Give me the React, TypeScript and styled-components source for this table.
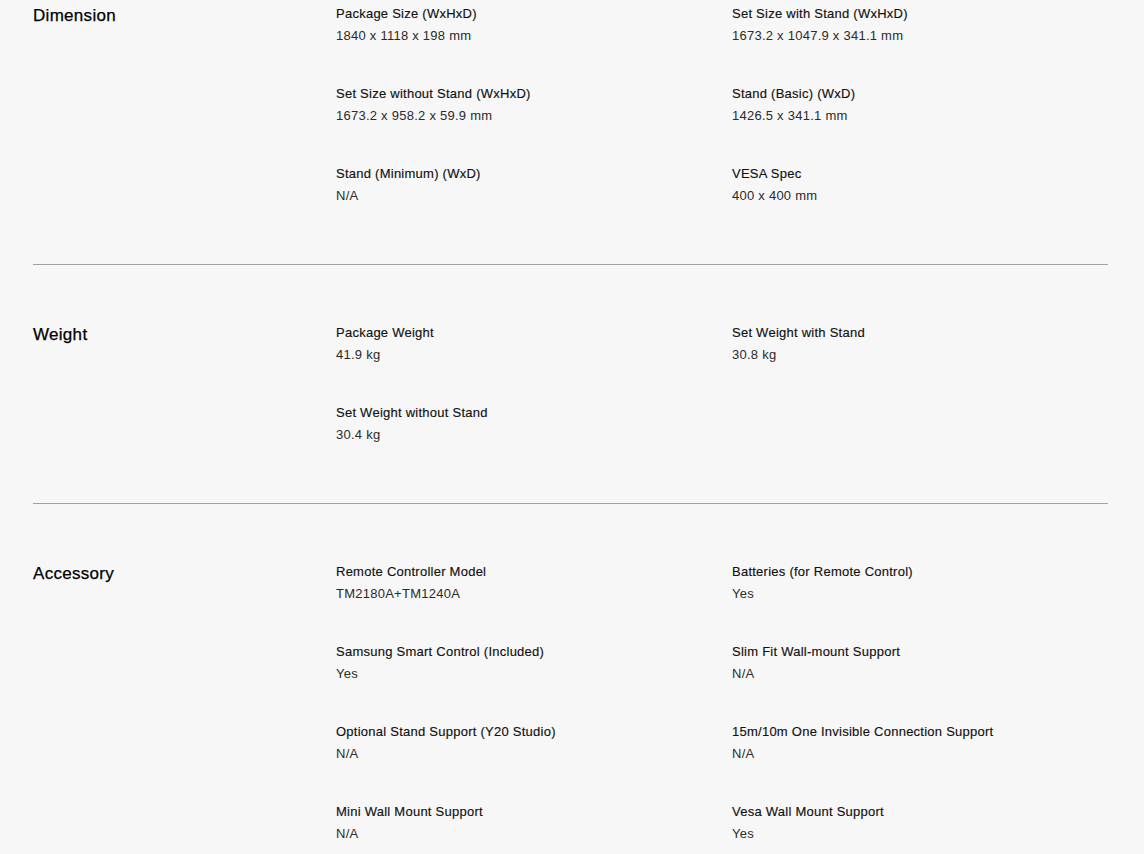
import React from 'react';
import styled, { createGlobalStyle } from 'styled-components';

type Spec = { label: string; value: string };
type Group = { title: string; specs: Spec[] };

const groups: Group[] = [
  {
    title: 'Dimension',
    specs: [
      { label: 'Package Size (WxHxD)', value: '1840 x 1118 x 198 mm' },
      { label: 'Set Size with Stand (WxHxD)', value: '1673.2 x 1047.9 x 341.1 mm' },
      { label: 'Set Size without Stand (WxHxD)', value: '1673.2 x 958.2 x 59.9 mm' },
      { label: 'Stand (Basic) (WxD)', value: '1426.5 x 341.1 mm' },
      { label: 'Stand (Minimum) (WxD)', value: 'N/A' },
      { label: 'VESA Spec', value: '400 x 400 mm' },
    ],
  },
  {
    title: 'Weight',
    specs: [
      { label: 'Package Weight', value: '41.9 kg' },
      { label: 'Set Weight with Stand', value: '30.8 kg' },
      { label: 'Set Weight without Stand', value: '30.4 kg' },
    ],
  },
  {
    title: 'Accessory',
    specs: [
      { label: 'Remote Controller Model', value: 'TM2180A+TM1240A' },
      { label: 'Batteries (for Remote Control)', value: 'Yes' },
      { label: 'Samsung Smart Control (Included)', value: 'Yes' },
      { label: 'Slim Fit Wall-mount Support', value: 'N/A' },
      { label: 'Optional Stand Support (Y20 Studio)', value: 'N/A' },
      { label: '15m/10m One Invisible Connection Support', value: 'N/A' },
      { label: 'Mini Wall Mount Support', value: 'N/A' },
      { label: 'Vesa Wall Mount Support', value: 'Yes' },
    ],
  },
];

export default function App() {
  return (
    <>
      <GlobalStyle />
      <Page>
        {groups.map((group, i) => (
          <Section key={group.title} first={i === 0}>
            <Title>{group.title}</Title>
            <SpecGrid>
              {group.specs.map((spec) => (
                <Item key={spec.label}>
                  <Label>{spec.label}</Label>
                  <Value>{spec.value}</Value>
                </Item>
              ))}
            </SpecGrid>
          </Section>
        ))}
      </Page>
    </>
  );
}

const GlobalStyle = createGlobalStyle`
  html, body {
    margin: 0;
    padding: 0;
    background: #f7f7f7;
  }

  body {
    font-family: 'Liberation Sans', Arial, sans-serif;
    color: #1a1a1a;
  }
`;

const Page = styled.main`
  width: 1144px;
  padding: 0 36px 0 33px;
  box-sizing: border-box;
`;

const Section = styled.section<{ first?: boolean }>`
  display: grid;
  grid-template-columns: 303px 1fr;

  padding: ${({ first }) => (first ? '4px' : '58px')} 0 58px;

  border-bottom: 1px solid #a3a3a3;
`;

const Title = styled.h2`
  margin: 0;

  font-size: 17px;
  font-weight: normal;
  line-height: 24px;
  letter-spacing: 0.3px;
  color: #000;
  -webkit-text-stroke: 0.25px #000;
`;

const SpecGrid = styled.div`
  display: grid;
  grid-template-columns: 396px 1fr;
  row-gap: 38px;
`;

const Item = styled.div`
  display: flex;
  flex-direction: column;
  gap: 2px;
`;

const Label = styled.div`
  font-size: 13px;
  line-height: 20px;
  letter-spacing: 0.25px;
  color: #111;
  -webkit-text-stroke: 0.15px #111;
`;

const Value = styled.div`
  font-size: 13px;
  line-height: 20px;
  letter-spacing: 0.25px;
  color: #2b2b2b;
`;
